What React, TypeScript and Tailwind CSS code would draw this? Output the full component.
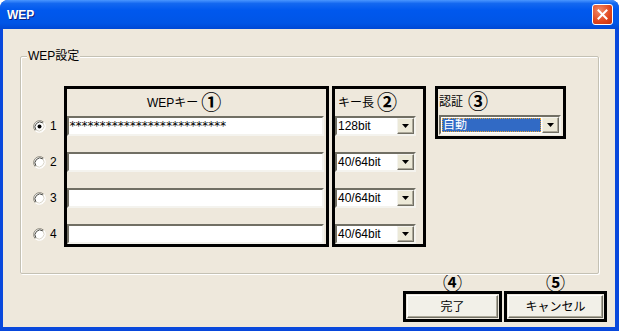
import React from "react";

const font = { fontFamily: '"Liberation Sans","Noto Sans CJK JP",sans-serif' };

function Radio({ checked }: { checked?: boolean }) {
  return (
    <svg width="13" height="13" viewBox="0 0 13 13">
      <circle cx="6.5" cy="6.5" r="5.5" fill="#fff" />
      <path d="M2.26 10.74 A6 6 0 0 1 10.74 2.26" fill="none" stroke="#8a877c" strokeWidth="1" />
      <path d="M10.74 2.26 A6 6 0 0 1 2.26 10.74" fill="none" stroke="#ffffff" strokeWidth="1" />
      <path d="M3.0 10.0 A5 5 0 0 1 10.0 3.0" fill="none" stroke="#4a4a44" strokeWidth="1" />
      <path d="M10.0 3.0 A5 5 0 0 1 3.0 10.0" fill="none" stroke="#d8d4c8" strokeWidth="1" />
      {checked && <circle cx="6.5" cy="6.5" r="2" fill="#000" />}
    </svg>
  );
}

function DropBtn() {
  return (
    <div className="w-[17px] h-full flex items-center justify-center bg-[#ECE9D8] border border-t-[#F4F3EE] border-l-[#F4F3EE] border-b-[#716F64] border-r-[#716F64] shadow-[inset_-1px_-1px_0_#ACA899]">
      <svg width="7" height="4" viewBox="0 0 7 4">
        <polygon points="0,0 7,0 3.5,4" fill="#000" />
      </svg>
    </div>
  );
}

function Select({ value }: { value: string }) {
  return (
    <div className="w-[81px] h-[20px] flex bg-white border-2 border-t-[#716F64] border-l-[#716F64] border-b-[#F4F3EE] border-r-[#F4F3EE]">
      <div className="flex-1 flex items-center pl-[1px] text-[12px] text-black">{value}</div>
      <DropBtn />
    </div>
  );
}

function KeyInput({ text }: { text?: string }) {
  return (
    <div className="w-[257px] h-[20px] flex items-center bg-white border-2 border-t-[#716F64] border-l-[#716F64] border-b-[#F4F3EE] border-r-[#F4F3EE]">
      {text && (
        <span className="text-[12px] text-black leading-none" style={{ fontFamily: '"DejaVu Sans Mono",monospace', letterSpacing: "-1.2px" }}>
          {text}
        </span>
      )}
    </div>
  );
}

function Btn({ label, num }: { label: string; num: string }) {
  return (
    <div className="flex flex-col items-center">
      <div className="h-[16px] flex items-center justify-center text-[19px] font-bold leading-none text-black">{num}</div>
      <div className="border-[3px] border-black p-[1px]">
        <div className="h-[23px] flex items-center justify-center bg-[#F2F0E8] border border-t-[#FFFFFF] border-l-[#FFFFFF] border-b-[#716F64] border-r-[#716F64] shadow-[inset_-1px_-1px_0_#ACA899] text-[12px] text-black" style={{ width: label === "完了" ? 91 : 95 }}>
          {label}
        </div>
      </div>
    </div>
  );
}

export default function App() {
  const rows = [1, 2, 3, 4];
  return (
    <div className="w-[619px] h-[331px] flex flex-col bg-[#0848DC] rounded-t-[8px] overflow-hidden" style={font}>
      {/* title bar */}
      <div className="h-[29px] flex items-center justify-between pl-[7px] pr-[6px] bg-[linear-gradient(to_bottom,#4A96FF_0%,#1468F0_12%,#0058EE_35%,#0055E6_80%,#0048D4_100%)]">
        <span className="text-white text-[12px] font-bold [text-shadow:1px_1px_0_#0A1E78]">WEP</span>
        <div className="w-[21px] h-[21px] rounded-[3px] border border-white bg-[radial-gradient(circle_at_35%_30%,#F28A68,#E0451C_60%,#C03010)] flex items-center justify-center">
          <svg width="11" height="11" viewBox="0 0 11 11">
            <path d="M1.5 1.5 L9.5 9.5 M9.5 1.5 L1.5 9.5" stroke="#fff" strokeWidth="2" strokeLinecap="square" />
          </svg>
        </div>
      </div>
      {/* content */}
      <div className="flex-1 ml-[3px] mr-[4px] mb-[4px] bg-[#EEE8DC] flex flex-col">
        {/* groupbox */}
        <div className="relative mt-[27px] ml-[17px] w-[579px] h-[218px] border border-[#C4C1B4] rounded-[2px] shadow-[inset_1px_1px_0_#FFFFFF,1px_1px_0_#FFFFFF]">
          <span className="absolute -top-[8px] left-[6px] px-[1px] bg-[#EEE8DC] text-[12px] leading-[14px] text-black">WEP設定</span>
          <div className="flex items-start pt-[29px]">
            {/* radio column */}
            <div className="w-[43px] pt-[30px] pl-[12px] flex flex-col gap-[16px]">
              {rows.map((r) => (
                <div key={r} className="h-[20px] flex items-center gap-[4px]">
                  <Radio checked={r === 1} />
                  <span className="text-[12px] text-black">{r}</span>
                </div>
              ))}
            </div>
            {/* key box */}
            <div className="w-[265px] h-[161px] border-[3px] border-black flex flex-col">
              <div className="h-[27px] flex items-center pl-[80px] gap-[3px] text-black">
                <span className="text-[12px]">WEPキー</span>
                <span className="text-[20px] font-bold leading-none">①</span>
              </div>
              <div className="flex flex-col gap-[16px]">
                <KeyInput text="**************************" />
                <KeyInput />
                <KeyInput />
                <KeyInput />
              </div>
            </div>
            {/* key length box */}
            <div className="ml-[3px] w-[94px] h-[161px] border-[3px] border-black flex flex-col">
              <div className="h-[27px] flex items-center pl-[3px] gap-[3px] text-black">
                <span className="text-[12px]">キー長</span>
                <span className="text-[20px] font-bold leading-none">②</span>
              </div>
              <div className="flex flex-col gap-[16px]">
                <Select value="128bit" />
                <Select value="40/64bit" />
                <Select value="40/64bit" />
                <Select value="40/64bit" />
              </div>
            </div>
            {/* auth box */}
            <div className="ml-[9px] w-[131px] h-[53px] border-[3px] border-black flex flex-col">
              <div className="h-[26px] flex items-center pl-[1px] gap-[5px] text-black">
                <span className="text-[12px]">認証</span>
                <span className="text-[20px] font-bold leading-none">③</span>
              </div>
              <div className="ml-[1px] w-[122px] h-[20px] flex bg-white border-2 border-t-[#716F64] border-l-[#716F64] border-b-[#F4F3EE] border-r-[#F4F3EE]">
                <div className="flex-1 p-[1px] flex">
                  <div className="flex-1 flex items-center pl-[1px] bg-[#316AC5] outline-1 outline-dotted outline-[#E8A430] -outline-offset-1 text-white text-[12px]">
                    自動
                  </div>
                </div>
                <DropBtn />
              </div>
            </div>
          </div>
        </div>
        {/* buttons */}
        <div className="mt-[1px] flex justify-end gap-[2px] mr-[8px]">
          <Btn label="完了" num="④" />
          <Btn label="キャンセル" num="⑤" />
        </div>
      </div>
    </div>
  );
}
